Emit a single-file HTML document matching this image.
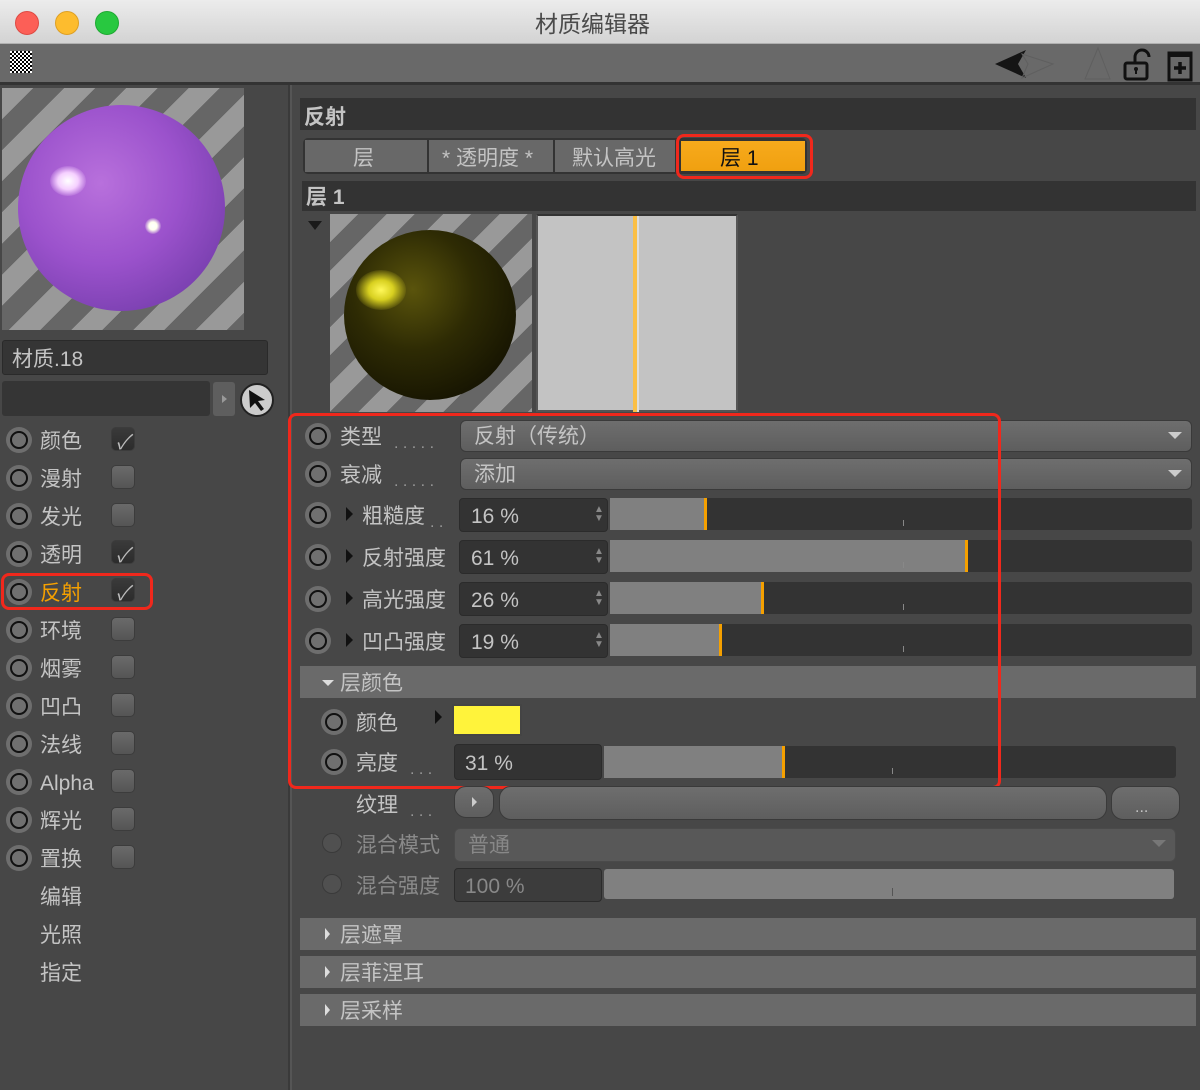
<!DOCTYPE html>
<html><head><meta charset="utf-8"><style>
*{margin:0;padding:0;box-sizing:border-box}
body{width:1200px;height:1090px;background:#474747;position:relative;overflow:hidden;font-family:"Liberation Sans","Noto Sans CJK SC",sans-serif;color:#c4c4c4}
div,span{position:absolute}
.t{font-size:21px;line-height:24px;white-space:nowrap;margin-top:2px}
.rad{width:26px;height:26px;border-radius:50%;background:#6e6e6e;}
.rad:after{content:"";position:absolute;left:4px;top:4px;width:18px;height:18px;border-radius:50%;border:2px solid #111;background:#707070;box-sizing:border-box}
.cb{width:24px;height:24px;border-radius:5px;background:linear-gradient(#6a6a6a,#555);border:1px solid #3c3c3c}
.cbk{background:linear-gradient(#3a3a3a,#2c2c2c)}
.cbk:after{content:"✓";position:absolute;left:4px;top:-2px;font-size:20px;color:#bbb;font-style:italic}
.bar{background:#333}
.dd{background:linear-gradient(#6e6e6e,#5e5e5e);border-radius:6px;border:1px solid #3a3a3a}
.num{background:#333;border-radius:4px;border:1px solid #2b2b2b}
.sl{background:#333;border-radius:3px}
.fill{background:#808080;left:0;top:0;bottom:0}
.mk{width:3px;top:0;bottom:0;background:#f5a000}
.sec{background:#6a6a6a}
.tri{width:0;height:0}
.dots{color:#999;font-size:16px}
</style></head><body>
<div style="left:0;top:0;width:1200px;height:44px;background:linear-gradient(#ececec,#d3d3d3);border-bottom:1px solid #b0b0b0"></div>
<div style="left:15px;top:11px;width:24px;height:24px;border-radius:50%;background:#fc5f57;border:1px solid #de4a43"></div>
<div style="left:55px;top:11px;width:24px;height:24px;border-radius:50%;background:#fdbc2e;border:1px solid #dea024"></div>
<div style="left:95px;top:11px;width:24px;height:24px;border-radius:50%;background:#28c840;border:1px solid #1fa933"></div>
<div class="t" style="left:535px;top:10px;font-size:23px;color:#4a4a4a">材质编辑器</div>
<div style="left:0;top:44px;width:1200px;height:38px;background:#696969"></div>
<div style="left:0;top:82px;width:1200px;height:3px;background:#333"></div>
<div style="left:10px;top:51px;width:22px;height:22px;background:repeating-conic-gradient(#000 0 25%,#fff 0 50%) 0 0/4px 4px"></div>
<svg style="position:absolute;left:990px;top:44px" width="210" height="38">
<path d="M5 20 L36 6 L28 20 L36 34 Z" fill="#151515"/>
<path d="M32 10 L63 20 L32 34 L38 20 Z" fill="none" stroke="#5f5f5f"/>
<path d="M108 4 L95 35 L120 35 Z" fill="none" stroke="#5f5f5f"/>
<path d="M145 20 v-7 a7 7 0 0 1 14 0" fill="none" stroke="#111" stroke-width="3"/>
<rect x="135" y="19" width="22" height="16" rx="2" fill="none" stroke="#111" stroke-width="3"/>
<circle cx="146" cy="25" r="2" fill="#111"/><rect x="145" y="25" width="2" height="5" fill="#111"/>
<rect x="179" y="9" width="22" height="27" fill="none" stroke="#111" stroke-width="3"/>
<rect x="179" y="8" width="22" height="5" fill="#111"/>
<path d="M184 24h12M190 18v12" stroke="#111" stroke-width="3.5"/>
</svg>
<div style="left:288px;top:85px;width:2px;height:1005px;background:#3a3a3a"></div>
<div style="left:290px;top:85px;width:2px;height:1005px;background:#555"></div>
<div style="left:2px;top:88px;width:242px;height:242px;background:repeating-linear-gradient(135deg,#999 0 22px,#666 22px 44px);overflow:hidden">
<div style="left:16px;top:17px;width:207px;height:206px;border-radius:50%;background:radial-gradient(circle at 40% 38%,#b870dc 0,#9b52cc 45%,#7a40b0 78%,#6040a0 100%)"></div>
<div style="left:48px;top:78px;width:36px;height:30px;border-radius:50%;background:radial-gradient(#fff 0,#f5d0ff 40%,rgba(200,120,230,0) 75%)"></div>
<div style="left:143px;top:130px;width:16px;height:16px;border-radius:50%;background:radial-gradient(#fff 0,#ffe 35%,rgba(200,120,230,0) 75%)"></div>
</div>
<div style="left:2px;top:340px;width:266px;height:35px;background:#353535;border-radius:3px;border:1px solid #2a2a2a"></div>
<div class="t" style="left:12px;top:346px">材质.18</div>
<div style="left:2px;top:381px;width:208px;height:35px;background:#353535;border-radius:3px"></div>
<div style="left:213px;top:382px;width:22px;height:34px;background:#5e5e5e;border-radius:3px"></div>
<div class="tri" style="left:222px;top:395px;border-left:5px solid #999;border-top:4px solid transparent;border-bottom:4px solid transparent"></div>
<div style="left:240px;top:383px;width:34px;height:34px;border-radius:50%;background:#ccc;border:2px solid #222"></div>
<svg style="position:absolute;left:246px;top:388px" width="24" height="24"><path d="M3 2 L19 12 L12 13 L18 21 L15 23 L9 15 L4 20 Z" fill="#111"/></svg>
<div class="rad" style="left:6px;top:427px"></div><div class="t" style="left:40px;top:428px">颜色</div><div class="cb cbk" style="left:111px;top:427px"></div>
<div class="rad" style="left:6px;top:465px"></div><div class="t" style="left:40px;top:466px">漫射</div><div class="cb" style="left:111px;top:465px"></div>
<div class="rad" style="left:6px;top:503px"></div><div class="t" style="left:40px;top:504px">发光</div><div class="cb" style="left:111px;top:503px"></div>
<div class="rad" style="left:6px;top:541px"></div><div class="t" style="left:40px;top:542px">透明</div><div class="cb cbk" style="left:111px;top:540px"></div>
<div class="rad" style="left:6px;top:579px"></div><div class="t" style="left:40px;top:580px;color:#f5a000">反射</div><div class="cb cbk" style="left:111px;top:578px"></div>
<div style="left:1px;top:573px;width:152px;height:37px;border:3px solid #f0281c;border-radius:8px"></div>
<div class="rad" style="left:6px;top:617px"></div><div class="t" style="left:40px;top:618px">环境</div><div class="cb" style="left:111px;top:617px"></div>
<div class="rad" style="left:6px;top:655px"></div><div class="t" style="left:40px;top:656px">烟雾</div><div class="cb" style="left:111px;top:655px"></div>
<div class="rad" style="left:6px;top:693px"></div><div class="t" style="left:40px;top:694px">凹凸</div><div class="cb" style="left:111px;top:693px"></div>
<div class="rad" style="left:6px;top:731px"></div><div class="t" style="left:40px;top:732px">法线</div><div class="cb" style="left:111px;top:731px"></div>
<div class="rad" style="left:6px;top:769px"></div><div class="t" style="left:40px;top:770px">Alpha</div><div class="cb" style="left:111px;top:769px"></div>
<div class="rad" style="left:6px;top:807px"></div><div class="t" style="left:40px;top:808px">辉光</div><div class="cb" style="left:111px;top:807px"></div>
<div class="rad" style="left:6px;top:845px"></div><div class="t" style="left:40px;top:846px">置换</div><div class="cb" style="left:111px;top:845px"></div>
<div class="t" style="left:40px;top:884px">编辑</div>
<div class="t" style="left:40px;top:922px">光照</div>
<div class="t" style="left:40px;top:960px">指定</div>
<div class="bar" style="left:300px;top:98px;width:896px;height:32px"></div>
<div class="t" style="left:304px;top:104px;font-weight:bold">反射</div>
<div style="left:303px;top:138px;width:504px;height:36px;background:#333;border-radius:5px"></div>
<div style="left:305px;top:140px;width:122px;height:32px;background:#686868"></div><div class="t" style="left:353px;top:145px">层</div>
<div style="left:429px;top:140px;width:124px;height:32px;background:#686868"></div><div class="t" style="left:442px;top:145px">* 透明度 *</div>
<div style="left:555px;top:140px;width:120px;height:32px;background:#686868"></div><div class="t" style="left:572px;top:145px">默认高光</div>
<div style="left:680px;top:140px;width:126px;height:32px;background:linear-gradient(#f7aa1c,#f0a010);border:1px solid #333"></div><div class="t" style="left:720px;top:145px;color:#111">层 1</div>
<div style="left:676px;top:134px;width:137px;height:45px;border:3px solid #f0281c;border-radius:8px"></div>
<div class="bar" style="left:302px;top:181px;width:894px;height:30px"></div>
<div class="t" style="left:306px;top:184px;font-weight:bold">层 1</div>
<div class="tri" style="left:308px;top:221px;border-top:9px solid #1a1a1a;border-left:7px solid transparent;border-right:7px solid transparent"></div>
<div style="left:330px;top:214px;width:202px;height:198px;background:repeating-linear-gradient(135deg,#999 0 20px,#666 20px 40px);overflow:hidden">
<div style="left:14px;top:16px;width:172px;height:170px;border-radius:50%;background:radial-gradient(circle at 40% 35%,#5a540c 0,#2e2b04 40%,#181602 75%,#0c0c00 100%)"></div>
<div style="left:26px;top:56px;width:50px;height:40px;border-radius:50%;background:radial-gradient(#fff85a 0,#d8d020 35%,rgba(120,110,0,0) 75%)"></div>
</div>
<div style="left:536px;top:214px;width:202px;height:198px;background:#c3c3c3;border:2px solid #555;border-top-color:#333"></div>
<div style="left:633px;top:216px;width:4px;height:196px;background:#fbbf45"></div>
<div style="left:637px;top:216px;width:2px;height:196px;background:#ddd"></div>
<div class="rad" style="left:305px;top:423px"></div><div class="t" style="left:340px;top:424px">类型</div><div class="t dots" style="left:394px;top:430px">. . . . .</div>
<div class="dd" style="left:460px;top:420px;width:732px;height:32px"></div><div class="t" style="left:474px;top:423px">反射（传统）</div>
<div class="tri" style="left:1168px;top:432px;border-top:7px solid #ccc;border-left:7px solid transparent;border-right:7px solid transparent"></div>
<div class="rad" style="left:305px;top:461px"></div><div class="t" style="left:340px;top:462px">衰减</div><div class="t dots" style="left:394px;top:468px">. . . . .</div>
<div class="dd" style="left:460px;top:458px;width:732px;height:32px"></div><div class="t" style="left:474px;top:461px">添加</div>
<div class="tri" style="left:1168px;top:470px;border-top:7px solid #ccc;border-left:7px solid transparent;border-right:7px solid transparent"></div>
<div class="rad" style="left:305px;top:502px"></div><div class="tri" style="left:346px;top:507px;border-left:7px solid #111;border-top:7px solid transparent;border-bottom:7px solid transparent"></div><div class="t" style="left:362px;top:503px">粗糙度</div><div class="t dots" style="left:430px;top:509px">. .</div>
<div class="num" style="left:459px;top:498px;width:149px;height:34px"></div><div class="t" style="left:471px;top:503px">16 %</div>
<div class="sl" style="left:610px;top:498px;width:582px;height:32px"><div class="fill" style="width:95px"></div><div class="mk" style="left:94px"></div></div>
<div class="rad" style="left:305px;top:544px"></div><div class="tri" style="left:346px;top:549px;border-left:7px solid #111;border-top:7px solid transparent;border-bottom:7px solid transparent"></div><div class="t" style="left:362px;top:545px">反射强度</div>
<div class="num" style="left:459px;top:540px;width:149px;height:34px"></div><div class="t" style="left:471px;top:545px">61 %</div>
<div class="sl" style="left:610px;top:540px;width:582px;height:32px"><div class="fill" style="width:356px"></div><div class="mk" style="left:355px"></div></div>
<div class="rad" style="left:305px;top:586px"></div><div class="tri" style="left:346px;top:591px;border-left:7px solid #111;border-top:7px solid transparent;border-bottom:7px solid transparent"></div><div class="t" style="left:362px;top:587px">高光强度</div>
<div class="num" style="left:459px;top:582px;width:149px;height:34px"></div><div class="t" style="left:471px;top:587px">26 %</div>
<div class="sl" style="left:610px;top:582px;width:582px;height:32px"><div class="fill" style="width:152px"></div><div class="mk" style="left:151px"></div></div>
<div class="rad" style="left:305px;top:628px"></div><div class="tri" style="left:346px;top:633px;border-left:7px solid #111;border-top:7px solid transparent;border-bottom:7px solid transparent"></div><div class="t" style="left:362px;top:629px">凹凸强度</div>
<div class="num" style="left:459px;top:624px;width:149px;height:34px"></div><div class="t" style="left:471px;top:629px">19 %</div>
<div class="sl" style="left:610px;top:624px;width:582px;height:32px"><div class="fill" style="width:110px"></div><div class="mk" style="left:109px"></div></div>
<div style="left:594px;top:505px;font-size:10px;line-height:9px;color:#888">▲<br>▼</div>
<div style="left:594px;top:547px;font-size:10px;line-height:9px;color:#888">▲<br>▼</div>
<div style="left:594px;top:589px;font-size:10px;line-height:9px;color:#888">▲<br>▼</div>
<div style="left:594px;top:631px;font-size:10px;line-height:9px;color:#888">▲<br>▼</div>
<div style="left:588px;top:754px;font-size:10px;line-height:9px;color:#888">▲<br>▼</div>
<div style="left:588px;top:876px;font-size:10px;line-height:9px;color:#666">▲<br>▼</div>
<div class="sec" style="left:300px;top:666px;width:896px;height:32px"></div>
<div class="tri" style="left:322px;top:680px;border-top:6px solid #ddd;border-left:6px solid transparent;border-right:6px solid transparent"></div>
<div class="t" style="left:340px;top:670px">层颜色</div>
<div class="rad" style="left:321px;top:709px"></div><div class="t" style="left:356px;top:710px">颜色</div>
<div class="tri" style="left:435px;top:710px;border-left:7px solid #111;border-top:7px solid transparent;border-bottom:7px solid transparent"></div>
<div style="left:452px;top:704px;width:70px;height:32px;background:#fff33b;border:2px solid #444"></div>
<div class="rad" style="left:321px;top:749px"></div><div class="t" style="left:356px;top:750px">亮度</div><div class="t dots" style="left:410px;top:756px">. . .</div>
<div class="num" style="left:454px;top:744px;width:148px;height:36px"></div><div class="t" style="left:465px;top:750px">31 %</div>
<div class="sl" style="left:604px;top:746px;width:572px;height:32px"><div class="fill" style="width:180px"></div><div class="mk" style="left:178px"></div></div>
<div style="left:288px;top:413px;width:713px;height:376px;border:3px solid #f0281c;border-radius:8px"></div>
<div class="t" style="left:356px;top:792px">纹理</div><div class="t dots" style="left:410px;top:798px">. . .</div>
<div class="dd" style="left:454px;top:786px;width:40px;height:32px;border-radius:12px"></div>
<div class="tri" style="left:472px;top:797px;border-left:5px solid #ccc;border-top:5px solid transparent;border-bottom:5px solid transparent"></div>
<div class="dd" style="left:499px;top:786px;width:608px;height:34px;border-radius:12px"></div>
<div class="dd" style="left:1111px;top:786px;width:69px;height:34px;border-radius:12px"></div>
<div class="t" style="left:1135px;top:794px;font-size:16px">...</div>
<div style="left:322px;top:833px;width:20px;height:20px;border-radius:50%;border:1px solid #3a3a3a;background:#505050"></div>
<div class="t" style="left:356px;top:832px;color:#8a8a8a">混合模式</div>
<div class="dd" style="left:454px;top:828px;width:722px;height:34px;background:#585858;border-color:#4a4a4a"></div><div class="t" style="left:468px;top:832px;color:#888">普通</div>
<div class="tri" style="left:1152px;top:840px;border-top:7px solid #777;border-left:7px solid transparent;border-right:7px solid transparent"></div>
<div style="left:322px;top:874px;width:20px;height:20px;border-radius:50%;border:1px solid #3a3a3a;background:#505050"></div>
<div class="t" style="left:356px;top:873px;color:#8a8a8a">混合强度</div>
<div class="num" style="left:454px;top:868px;width:148px;height:34px;background:#3c3c3c"></div><div class="t" style="left:465px;top:873px;color:#888">100 %</div>
<div class="sl" style="left:604px;top:869px;width:570px;height:30px;background:#808080"></div>
<div style="left:892px;top:888px;width:1px;height:8px;background:#555"></div>
<div style="left:903px;top:520px;width:1px;height:6px;background:#888"></div>
<div style="left:903px;top:562px;width:1px;height:6px;background:#888"></div>
<div style="left:903px;top:604px;width:1px;height:6px;background:#888"></div>
<div style="left:903px;top:646px;width:1px;height:6px;background:#888"></div>
<div style="left:892px;top:768px;width:1px;height:6px;background:#888"></div>
<div class="sec" style="left:300px;top:918px;width:896px;height:32px"></div>
<div class="tri" style="left:325px;top:928px;border-left:5px solid #ddd;border-top:6px solid transparent;border-bottom:6px solid transparent"></div><div class="t" style="left:340px;top:922px">层遮罩</div>
<div class="sec" style="left:300px;top:956px;width:896px;height:32px"></div>
<div class="tri" style="left:325px;top:966px;border-left:5px solid #ddd;border-top:6px solid transparent;border-bottom:6px solid transparent"></div><div class="t" style="left:340px;top:960px">层菲涅耳</div>
<div class="sec" style="left:300px;top:994px;width:896px;height:32px"></div>
<div class="tri" style="left:325px;top:1004px;border-left:5px solid #ddd;border-top:6px solid transparent;border-bottom:6px solid transparent"></div><div class="t" style="left:340px;top:998px">层采样</div>
</body></html>
